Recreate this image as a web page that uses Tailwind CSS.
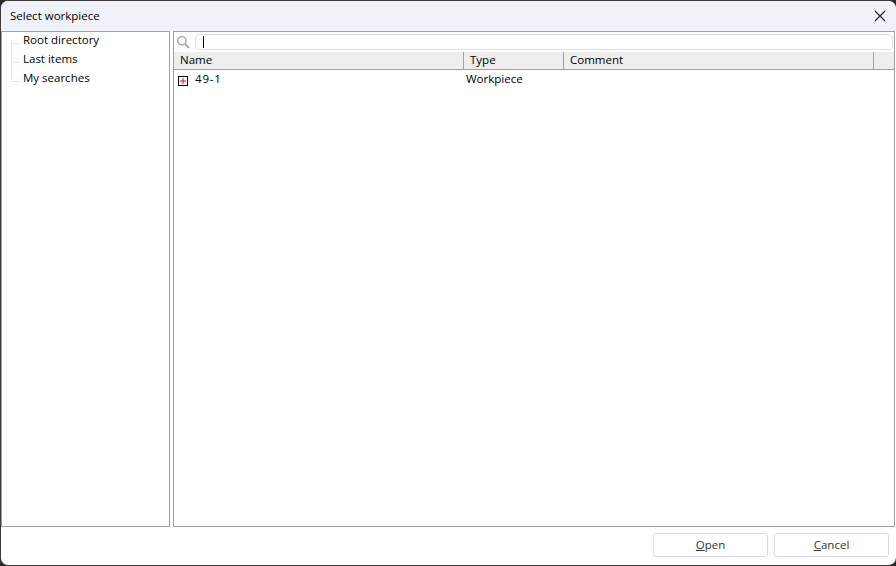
<!DOCTYPE html>
<html lang="en">
<head>
    <meta charset="UTF-8">
    <title>Select workpiece</title>
    <script src="https://cdn.jsdelivr.net/npm/@tailwindcss/browser@4"></script>
</head>
<body class="bg-[#2b2b2b]">
    <div class="w-[896px] h-[566px] flex flex-col overflow-hidden rounded-[8px] border border-[#3a3a3a] border-r-0 bg-white font-['Open_Sans',sans-serif] text-[11.5px] text-black">
        <!-- title bar -->
        <div class="h-[30px] shrink-0 flex items-center justify-between pl-[9px] pr-[10px] bg-[#eff2f9]">
            <span class="-mt-[1px]">Select workpiece</span>
            <svg width="12" height="12" viewBox="0 0 12 12" fill="none" stroke="#222" stroke-width="1.1"><path d="M1 1l10 10M11 1L1 11"/></svg>
        </div>
        <div class="h-[496px] shrink-0 flex gap-[3px]">
            <!-- tree -->
            <div class="w-[169px] border border-[#a0a0a0] relative">
                <div class="h-[19px] flex items-center"><span class="w-[9px] ml-[9px] mr-[3px] mt-[4px] border-t border-[#e6e6e6]"></span><span class="-mt-[3px]">Root directory</span></div>
                <div class="h-[19px] flex items-center"><span class="w-[9px] ml-[9px] mr-[3px] mt-[4px] border-t border-[#e6e6e6]"></span><span class="-mt-[3px]">Last items</span></div>
                <div class="h-[19px] flex items-center"><span class="w-[9px] ml-[9px] mr-[3px] mt-[4px] border-t border-[#e6e6e6]"></span><span class="-mt-[3px]">My searches</span></div>
                <div class="absolute left-[9px] top-[10px] h-[38px] border-l border-[#e6e6e6]"></div>
            </div>
            <!-- list -->
            <div class="w-[722px] border border-[#a0a0a0] flex flex-col">
                <div class="h-[20px] flex items-center pl-[2px] pr-[1px] gap-[5px]">
                    <svg width="14" height="14" viewBox="0 0 14 14" fill="none" stroke="#a8a8a8" stroke-width="1.4"><circle cx="5.8" cy="5.8" r="4.2"/><path d="M9 9l4 4" stroke-width="2"/></svg>
                    <div class="flex-1 h-[16px] rounded-[4px] border border-[#e0e0e0] flex items-center pl-[7px]"><span class="w-px h-[12px] bg-black"></span></div>
                </div>
                <div class="h-[18px] flex bg-[#eeeeee] border-b border-[#a0a0a0]">
                    <div class="w-[290px] pl-[6px] pb-[2px] border-r border-[#a0a0a0] flex items-center">Name</div>
                    <div class="w-[100px] pl-[6px] pb-[2px] border-r border-[#a0a0a0] flex items-center">Type</div>
                    <div class="w-[310px] pl-[6px] pb-[2px] border-r border-[#a0a0a0] flex items-center">Comment</div>
                </div>
                <div class="h-[18px] flex items-center">
                    <div class="w-[292px] flex items-center pl-[4px]">
                        <svg width="10" height="10" viewBox="0 0 10 10" class="mt-[3px]"><rect x="0.5" y="0.5" width="9" height="9" fill="#fff" stroke="#000"/><path d="M2 5h6M5 2v6" stroke="#f00000" stroke-width="1"/></svg>
                        <span class="ml-[7px] tracking-[0.8px]">49-1</span>
                    </div>
                    <div>Workpiece</div>
                </div>
            </div>
        </div>
        <!-- buttons -->
        <div class="flex-1 flex items-center justify-end pr-[7px] gap-[6px] pb-[2px]">
            <button class="w-[115px] h-[24px] rounded-[3px] border border-[#dcdcdc] bg-white text-[#333]"><u>O</u>pen</button>
            <button class="w-[115px] h-[24px] rounded-[3px] border border-[#dcdcdc] bg-white text-[#333]"><u>C</u>ancel</button>
        </div>
    </div>
</body>
</html>
